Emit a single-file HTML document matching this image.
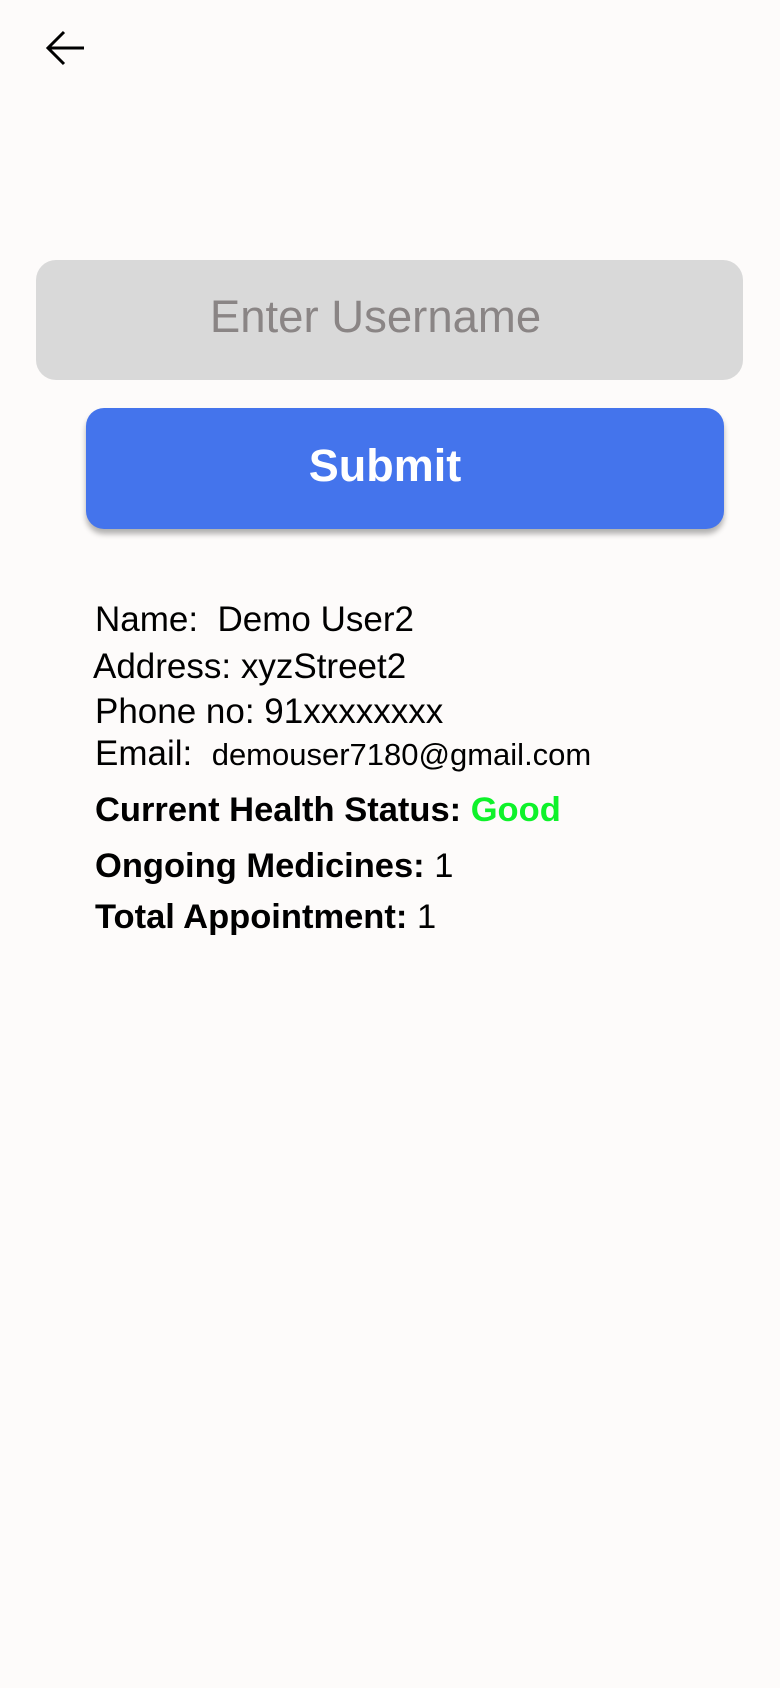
<!DOCTYPE html>
<html><head><meta charset="utf-8"><style>
html,body{margin:0;padding:0;}
body{width:780px;height:1688px;background:#fdfbfa;position:relative;overflow:hidden;font-family:"Liberation Sans",sans-serif;color:#000;}
.abs{position:absolute;white-space:nowrap;}
.inp{position:absolute;left:36px;top:260px;width:707px;height:120px;background:#d9d9d9;border-radius:20px;display:flex;align-items:center;justify-content:center;font-size:45.5px;color:#8a8585;}
.btn{position:absolute;left:86px;top:408px;width:638px;height:121px;background:#4474ec;border-radius:18px;box-shadow:0 5px 6px rgba(0,0,0,0.3);display:flex;align-items:center;justify-content:center;font-size:45px;font-weight:bold;color:#fff;}
.t{font-size:35px;line-height:40px;}
.b{font-size:34.5px;line-height:40px;font-weight:bold;}
</style></head><body>
<svg class="abs" style="left:44px;top:26px" width="44" height="44" viewBox="0 0 44 44"><path d="M40 22H5M20 6L4 22l16 16" fill="none" stroke="#000" stroke-width="3"/></svg>
<div class="inp"><span style="position:relative;left:-14px;top:-3px">Enter Username</span></div>
<div class="btn"><span style="position:relative;left:-20px;top:-3px">Submit</span></div>
<div class="abs t" style="left:95px;top:600px">Name:&nbsp; Demo User2</div>
<div class="abs t" style="left:93px;top:647px">Address: xyzStreet2</div>
<div class="abs t" style="left:95px;top:692px">Phone no: 91xxxxxxxx</div>
<div class="abs t" style="left:95px;top:734px">Email:&nbsp; <span style="font-size:31px">demouser7180@gmail.com</span></div>
<div class="abs b" style="left:95px;top:790px">Current Health Status: <span style="color:#0ef22a">Good</span></div>
<div class="abs b" style="left:95px;top:846px">Ongoing Medicines: <span style="font-weight:normal">1</span></div>
<div class="abs b" style="left:95px;top:897px">Total Appointment: <span style="font-weight:normal">1</span></div>
</body></html>
